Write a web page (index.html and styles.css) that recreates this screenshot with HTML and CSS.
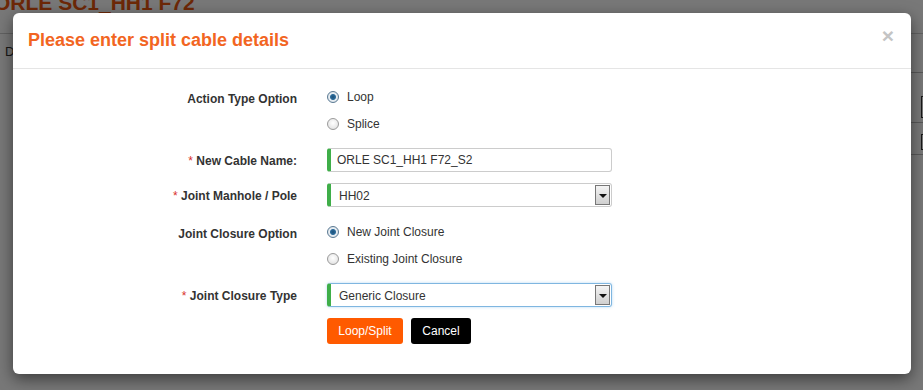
FILE: index.html
```html
<!DOCTYPE html>
<html lang="en">
<head>
    <meta charset="UTF-8">
    <title>Split Cable</title>
    <link rel="stylesheet" href="styles.css">
</head>
<body>
    <!-- Page behind the dialog -->
    <div class="page">
        <h1 class="page-title">ORLE SC1_HH1 F72</h1>
        <div class="page-tabs"><span class="tab">D</span></div>
        <div class="page-side">
            <div class="side-line"></div>
            <div class="side-box"></div>
            <div class="side-line"></div>
            <div class="side-box small"></div>
            <div class="side-line"></div>
        </div>
    </div>

    <div class="backdrop"></div>

    <!-- Split cable dialog -->
    <div class="modal">
        <div class="modal-header">
            <h4 class="modal-title">Please enter split cable details</h4>
            <span class="close">&times;</span>
        </div>
        <div class="modal-body">
            <form class="split-form">
                <label class="form-label radio-label">Action Type Option</label>
                <div class="radio-group">
                    <label class="radio"><input type="radio" name="action" checked> Loop</label>
                    <label class="radio"><input type="radio" name="action"> Splice</label>
                </div>

                <label class="form-label field-label"><span class="req">*</span> New Cable Name:</label>
                <div class="field">
                    <input type="text" class="text-input" value="ORLE SC1_HH1 F72_S2">
                </div>

                <label class="form-label field-label"><span class="req">*</span> Joint Manhole / Pole</label>
                <div class="field">
                    <div class="select-box">
                        <span class="select-value">HH02</span>
                        <span class="select-arrow"></span>
                    </div>
                </div>

                <label class="form-label radio-label">Joint Closure Option</label>
                <div class="radio-group">
                    <label class="radio"><input type="radio" name="closure" checked> New Joint Closure</label>
                    <label class="radio"><input type="radio" name="closure"> Existing Joint Closure</label>
                </div>

                <label class="form-label field-label"><span class="req">*</span> Joint Closure Type</label>
                <div class="field">
                    <div class="select-box focused">
                        <span class="select-value">Generic Closure</span>
                        <span class="select-arrow"></span>
                    </div>
                </div>

                <div></div>
                <div class="actions">
                    <button type="button" class="btn btn-split">Loop/Split</button>
                    <button type="button" class="btn btn-cancel">Cancel</button>
                </div>
            </form>
        </div>
    </div>
</body>
</html>
```

FILE: styles.css
```css
body {
    margin: 0;
    font-family: "Liberation Sans", Arial, sans-serif;
    background-color: #ffffff;
    width: 923px;
    height: 390px;
    overflow: hidden;
    position: relative;
}

/* page behind */
.page {
    height: 390px;
}

.page-title {
    margin: -9px 0 0 -6px;
    font-size: 21px;
    font-weight: bold;
    color: #e8560f;
    line-height: 24px;
    white-space: nowrap;
}

.page-tabs {
    margin-top: 18px;
    border-top: 1px solid #cfcfcf;
    padding: 10px 0 0 5px;
    font-size: 13px;
    color: #333;
}

.page-side {
    position: absolute;
    right: 0;
    top: 72px;
    width: 12px;
}

.side-line {
    border-top: 1px solid #bbb;
    height: 9px;
}

.side-box {
    border: 1px solid #333;
    border-right: none;
    height: 20px;
    margin: 14px 0 4px 10px;
}

.side-box.small {
    height: 14px;
    margin-top: 2px;
}

.backdrop {
    position: absolute;
    inset: 0;
    background-color: rgba(0, 0, 0, 0.53);
}

/* dialog */
.modal {
    position: absolute;
    left: 13px;
    top: 13px;
    width: 898px;
    height: 361px;
    background-color: #ffffff;
    border-radius: 6px;
    box-shadow: 0 5px 15px rgba(0, 0, 0, 0.5);
}

.modal-header {
    display: flex;
    justify-content: space-between;
    align-items: center;
    height: 55px;
    padding: 0 17px 0 15px;
    border-bottom: 1px solid #e5e5e5;
}

.modal-title {
    margin: 0;
    font-size: 18px;
    font-weight: bold;
    color: #f26522;
}

.close {
    font-size: 21px;
    font-weight: bold;
    color: #c4c4c4;
    line-height: 1;
    margin-top: -10px;
}

.modal-body {
    padding: 14px 15px 0 15px;
}

.split-form {
    display: grid;
    grid-template-columns: 269px 285px;
    column-gap: 30px;
    align-items: start;
}

.form-label {
    text-align: right;
    font-size: 12px;
    font-weight: bold;
    color: #333;
}

.radio-label {
    padding-top: 9px;
}

.field-label {
    padding-top: 6px;
}

.req {
    color: #d9302c;
    font-weight: normal;
}

.radio-group {
    display: flex;
    flex-direction: column;
    margin-bottom: 11px;
}

.radio-group + .form-label + .field,
.field {
    margin-bottom: 11px;
}

.radio {
    display: flex;
    align-items: center;
    gap: 8px;
    height: 27px;
    font-size: 12px;
    color: #333;
}

.radio input {
    appearance: none;
    margin: 0;
    width: 12px;
    height: 12px;
    border-radius: 50%;
    border: 1px solid #9a9a9a;
    background: radial-gradient(circle at 50% 40%, #ffffff 0%, #dcdcdc 100%);
    box-sizing: border-box;
}

.radio input:checked {
    border-color: #5b7a93;
    background: radial-gradient(circle, #1b4f78 0, #2c6b9a 2.5px, #e8eef3 3.5px, #cfd8e0 100%);
}

.text-input {
    display: block;
    width: 285px;
    height: 24px;
    box-sizing: border-box;
    border: 1px solid #cccccc;
    border-left: 4px solid #3fae49;
    border-radius: 3px;
    padding: 0 6px;
    font-family: "Liberation Sans", Arial, sans-serif;
    font-size: 12px;
    color: #333;
    outline: none;
}

.select-box {
    display: flex;
    align-items: center;
    justify-content: space-between;
    width: 285px;
    height: 24px;
    box-sizing: border-box;
    border: 1px solid #cccccc;
    border-left: 4px solid #3fae49;
    border-radius: 3px;
    padding: 0 1px 0 8px;
    font-size: 12px;
    color: #333;
}

.select-box.focused {
    border-color: #7fb6e0;
    border-left-color: #3fae49;
    box-shadow: 0 0 3px rgba(102, 175, 233, 0.5);
}

.select-value {
    padding-top: 1px;
}

.select-arrow {
    position: relative;
    width: 15px;
    height: 20px;
    box-sizing: border-box;
    border: 1px solid #777;
    background: linear-gradient(#f4f4f4, #cfcfcf);
}

.select-arrow::after {
    content: "";
    position: absolute;
    left: 3px;
    top: 8px;
    border-left: 4px solid transparent;
    border-right: 4px solid transparent;
    border-top: 4px solid #111;
}

.actions {
    display: flex;
    gap: 8px;
}

.btn {
    height: 26px;
    border: none;
    border-radius: 3px;
    color: #ffffff;
    font-family: "Liberation Sans", Arial, sans-serif;
    font-size: 12px;
    padding: 0 11px;
    cursor: pointer;
}

.btn-split {
    background-color: #ff5a00;
    width: 76px;
}

.btn-cancel {
    background-color: #000000;
    width: 60px;
}
```
